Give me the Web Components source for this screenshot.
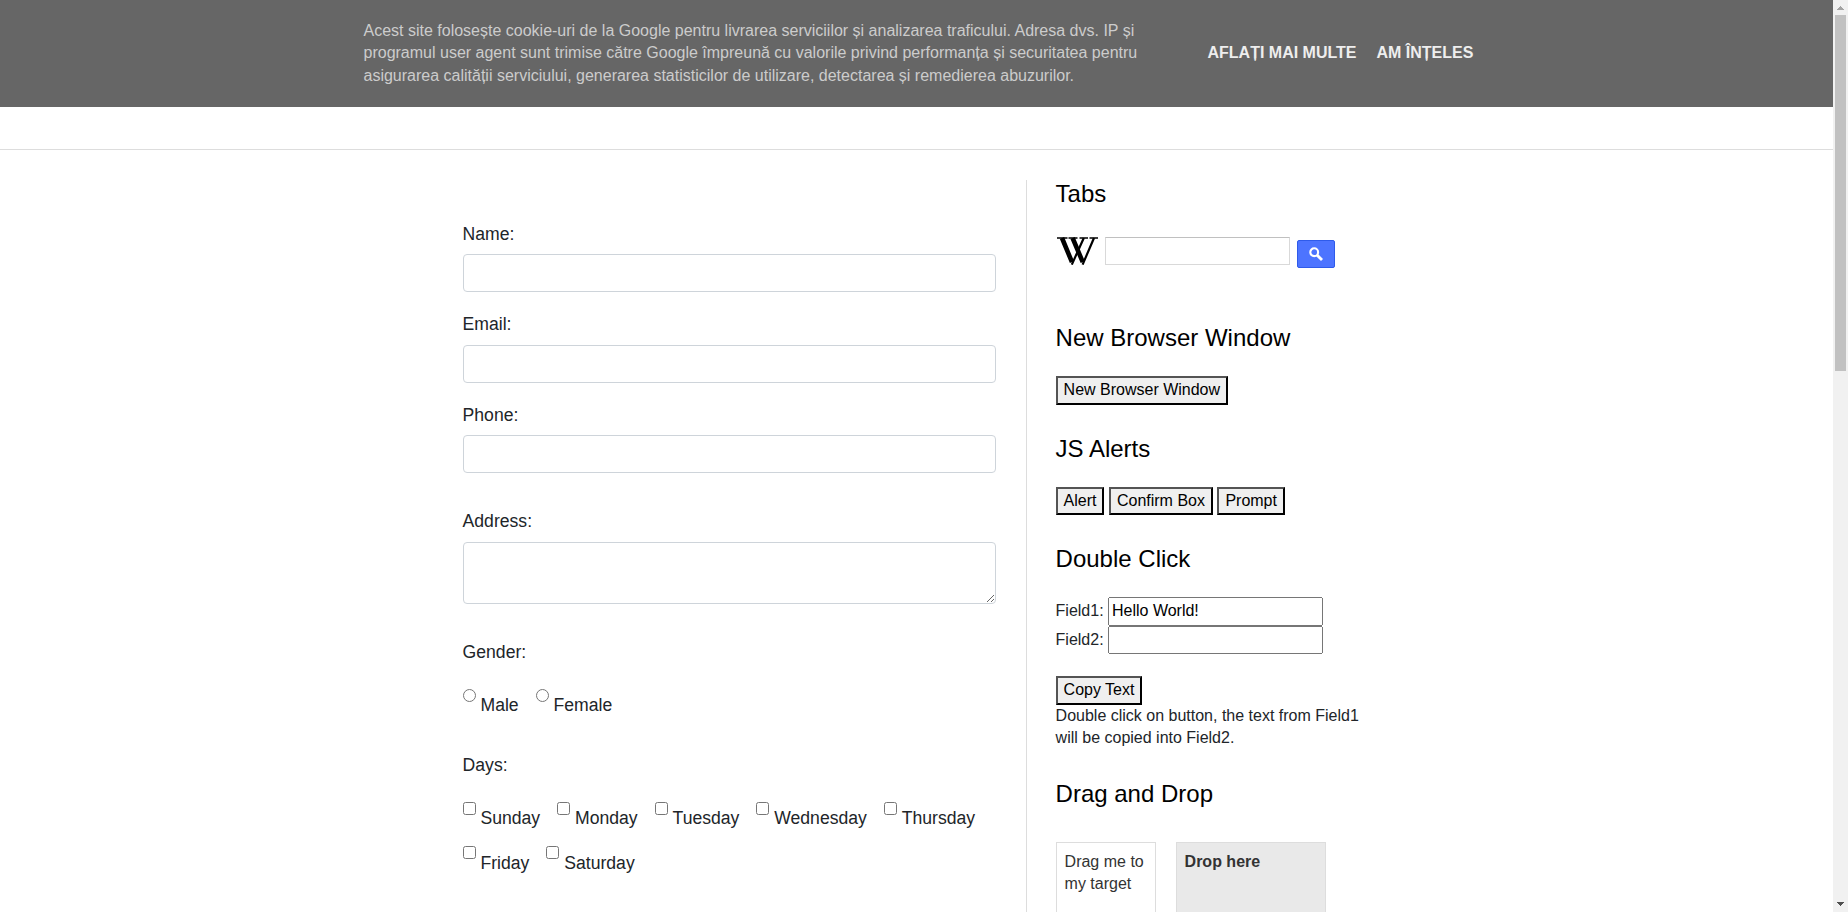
<!DOCTYPE html>
<html lang="ro">
<head>
<meta charset="utf-8">
<title>Automation practice</title>
<style>
html,body{margin:0;height:912px;overflow:hidden;background:#fff}
body{font:16px/22.4px "Liberation Sans",Arial,sans-serif;color:#212529}
</style>
</head>
<body>
<practice-page></practice-page>
<script>
const define = (name, html, setup) => customElements.define(name, class extends HTMLElement {
  constructor() {
    super();
    const t = document.createElement('template');
    t.innerHTML = html;
    this.attachShadow({mode: 'open'}).append(t.content.cloneNode(true));
  }
  connectedCallback() { if (setup) setup(this, this.shadowRoot); }
});

define('cookie-banner', `<style>
:host{display:flex;height:107px;box-sizing:border-box;background:#666;color:#ccc;padding:20px 0 0 363.5px}
.text{width:800px;white-space:nowrap}
nav{display:flex;gap:20px;padding:22.4px 0 0 44px;font-weight:700;color:#eee;white-space:nowrap}
</style><div class="text"><slot></slot></div><nav><span>AFLAȚI MAI MULTE</span><span>AM ÎNȚELES</span></nav>`);

define('text-field', `<style>
:host{display:block;font-size:17.6px;line-height:26.4px}
label{display:block;margin-bottom:6.8px;padding-top:1.2px}
input,textarea{display:block;box-sizing:border-box;width:100%;height:38px;border:1px solid #ced4da;border-radius:4px;padding:6px 12px;background:#fff;font:16px/24px "Liberation Sans",sans-serif;resize:vertical}
textarea{height:62px}
</style><label><slot></slot></label>`, (el, root) => {
  if (!root.querySelector('input,textarea'))
    root.append(document.createElement(el.hasAttribute('multiline') ? 'textarea' : 'input'));
});

define('choice-item', `<style>
:host{display:flex;gap:4.9px;font-size:17.6px;line-height:26.4px;height:35px}
input{width:13px;height:13px;margin:0;flex:none}
span{padding-top:3.4px}
</style><input><span><slot></slot></span>`, (el, root) => {
  root.querySelector('input').type = el.getAttribute('type') || 'checkbox';
});

define('choice-group', `<style>
:host{display:block;font-size:17.6px;line-height:26.4px}
.items{display:flex;flex-wrap:wrap;column-gap:17px;row-gap:9.4px;padding-top:23.5px}
</style><div><slot name="title"></slot></div><div class="items"><slot></slot></div>`);

define('side-section', `<style>
:host{display:block;margin-bottom:30px}
h2{margin:0 0 23.2px;font-weight:400;font-size:24px;line-height:28.8px;color:#000}
</style><h2><slot name="title"></slot></h2><slot></slot>`);

define('plain-button', `<style>
:host{display:block}
button{display:block;font:inherit;line-height:22.4px;color:#000;background:#efefef;border:2px outset #000;padding:1px 6px;margin:0;white-space:nowrap;border-radius:0}
</style><button><slot></slot></button>`);

define('copy-field', `<style>
:host{display:flex;height:28.4px;align-items:center}
label{width:52.4px}
input{box-sizing:border-box;width:215px;height:28.4px;font:inherit;line-height:22.4px;margin:0;padding:1px 2px;color:#000}
</style><label><slot></slot></label><input>`, (el, root) => {
  root.querySelector('input').value = el.getAttribute('value') || '';
});

define('wiki-search', `<style>
:host{display:flex;height:58px;padding-top:5px}
.logo{margin:0 7px 0 1.4px;flex:none}
input{box-sizing:border-box;width:185px;height:28px;border:1px solid #d9d9d9;border-top-color:#c0c0c0;background:#fff;margin:0;border-radius:0}
button{box-sizing:border-box;width:38px;height:28px;margin:3px 0 0 7px;padding:1px 0 0;border:1px solid #2f5bea;border-radius:2px;background:#4d74ff;display:flex;align-items:center;justify-content:center}
</style><svg class="logo" width="41" height="28" viewBox="0 0 41 28" fill="none" stroke="#000">
<path stroke-width="4.6" d="M5 1 15 25.2M15.6 1 25.8 25.2"/>
<path stroke-width="2.2" d="M14.8 27.6 26.8 1M25.6 27.6 37 1"/>
<path stroke-width="1.5" d="M0 1h10.5M11.5 1h9M22.5 1h8.5M32.5 1H41"/>
</svg><input><button><svg width="14" height="14" viewBox="0 0 14 14" fill="none" stroke="#fff"><circle cx="5.2" cy="5.2" r="3.9" stroke-width="2.1"/><path stroke-width="2.8" d="M7.9 7.9 13 13"/></svg></button>`);

define('drag-area', `<style>
:host{display:flex;gap:20px;padding-top:10px;color:#333}
div{box-sizing:border-box;height:152px;border:1px solid #ddd;padding:8px}
.drag{width:100px;background:#fff;white-space:nowrap}
.drop{width:150px;background:#e9e9e9;font-weight:700}
</style><div class="drag">Drag me to<br>my target</div><div class="drop">Drop here</div>`);

define('page-scrollbar', `<style>
:host{display:flex;flex-direction:column;justify-content:space-between;width:15px;height:912px;background:#f1f1f1}
svg{display:block}
.thumb{width:11px;height:356px;background:#c1c1c1;margin:0 2px auto}
</style><svg width="15" height="15" shape-rendering="crispEdges"><path d="M4 10h7v-1h-1v-1h-1v-1h-1v-1h-1v1h-1v1h-1v1h-1z" fill="#a3a3a3"/></svg>
<div class="thumb"></div>
<svg width="15" height="15" shape-rendering="crispEdges"><path d="M4 5h7v1h-1v1h-1v1h-1v1h-1v-1h-1v-1h-1v-1h-1z" fill="#505050"/></svg>`);

define('practice-page', `<style>
:host{display:flex;height:912px;overflow:hidden}
.view{width:1833px;height:912px;overflow:hidden}
.strip{height:42px;border-bottom:1px solid #ddd}
.cols{display:flex;margin-top:30px;padding-left:462.6px}
.form{width:533px;padding-top:39.6px;margin-right:30.4px}
text-field{margin-bottom:18.2px}
.address{margin:34px 0 35.5px}
.days{margin-top:28px}
.side{width:330px;height:732px;overflow:hidden;border-left:1px solid #ddd;padding-left:28.6px}
.row{display:flex;gap:4.45px}
.copy{margin-top:22.4px}
.note{white-space:nowrap}
.tabs{margin-bottom:29.4px}
</style>
<div class="view">
<cookie-banner>Acest site folosește cookie-uri de la Google pentru livrarea serviciilor și analizarea traficului. Adresa dvs. IP și<br>programul user agent sunt trimise către Google împreună cu valorile privind performanța și securitatea pentru<br>asigurarea calității serviciului, generarea statisticilor de utilizare, detectarea și remedierea abuzurilor.</cookie-banner>
<div class="strip"></div>
<div class="cols">
<div class="form">
<text-field>Name:</text-field>
<text-field>Email:</text-field>
<text-field>Phone:</text-field>
<text-field class="address" multiline>Address:</text-field>
<choice-group><span slot="title">Gender:</span><choice-item type="radio">Male</choice-item><choice-item type="radio">Female</choice-item></choice-group>
<choice-group class="days"><span slot="title">Days:</span><choice-item>Sunday</choice-item><choice-item>Monday</choice-item><choice-item>Tuesday</choice-item><choice-item>Wednesday</choice-item><choice-item>Thursday</choice-item><choice-item>Friday</choice-item><choice-item>Saturday</choice-item></choice-group>
</div>
<div class="side">
<side-section class="tabs"><span slot="title">Tabs</span><wiki-search></wiki-search></side-section>
<side-section><span slot="title">New Browser Window</span><div class="row"><plain-button>New Browser Window</plain-button></div></side-section>
<side-section><span slot="title">JS Alerts</span><div class="row"><plain-button>Alert</plain-button><plain-button>Confirm Box</plain-button><plain-button>Prompt</plain-button></div></side-section>
<side-section><span slot="title">Double Click</span><copy-field value="Hello World!">Field1:</copy-field><copy-field>Field2:</copy-field><div class="row copy"><plain-button>Copy Text</plain-button></div><div class="note">Double click on button, the text from Field1<br>will be copied into Field2.</div></side-section>
<side-section><span slot="title">Drag and Drop</span><drag-area></drag-area></side-section>
</div>
</div>
</div>
<page-scrollbar></page-scrollbar>`);
</script>
</body>
</html>
